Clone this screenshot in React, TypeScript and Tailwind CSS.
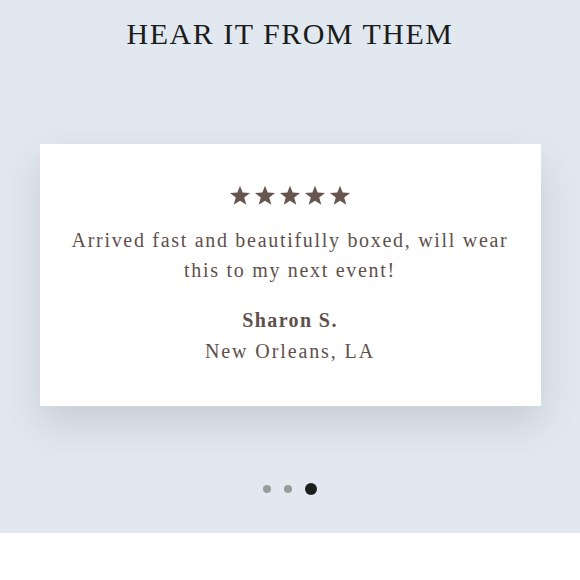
const serif = { fontFamily: '"Liberation Serif", "DejaVu Serif", serif' };

function Star() {
  return (
    <svg viewBox="0 0 24 24" className="h-[22px] w-[22px] fill-[#66564f]">
      <path d="M12 1.8l2.9 7.6 8.1.3-6.4 5.1 2.3 7.9L12 18.2l-6.9 4.5 2.3-7.9L1 9.7l8.1-.3z" />
    </svg>
  );
}

export default function App() {
  const active = 2;

  return (
    <div className="w-[580px] h-[580px] bg-white" style={serif}>
      <section className="h-[533px] bg-[#e1e8ef] flex flex-col items-center pt-[16px]">
        <h2 className="text-[30px] leading-[36px] tracking-[1.5px] text-[#1c1c1c]">
          HEAR IT FROM THEM
        </h2>

        {/* Testimonial card */}
        <div className="mt-[92px] w-[501px] h-[262px] bg-white shadow-[0_18px_36px_rgba(60,70,85,0.16)] flex flex-col items-center pt-[40px] text-[#5e504b]">
          <div className="flex gap-[3px]">
            {[0, 1, 2, 3, 4].map((i) => (
              <Star key={i} />
            ))}
          </div>
          <p className="mt-[19px] text-center text-[20px] leading-[30px] tracking-[1.7px] px-[30px]">
            Arrived fast and beautifully boxed, will wear this to my next event!
          </p>
          <p className="mt-[20px] text-[20px] leading-[30px] font-semibold tracking-[1.4px]">Sharon S.</p>
          <p className="mt-[1px] text-[20px] leading-[30px] tracking-[1.9px]">New Orleans, LA</p>
        </div>

        {/* Carousel dots */}
        <div className="mt-[77px] flex items-center gap-[13px]">
          {[0, 1, 2].map((i) =>
            i === active ? (
              <span key={i} className="w-[12px] h-[12px] rounded-full bg-[#1d1d1d]" />
            ) : (
              <span key={i} className="w-[8px] h-[8px] rounded-full bg-[#9a9b9d]" />
            )
          )}
        </div>
      </section>
    </div>
  );
}
